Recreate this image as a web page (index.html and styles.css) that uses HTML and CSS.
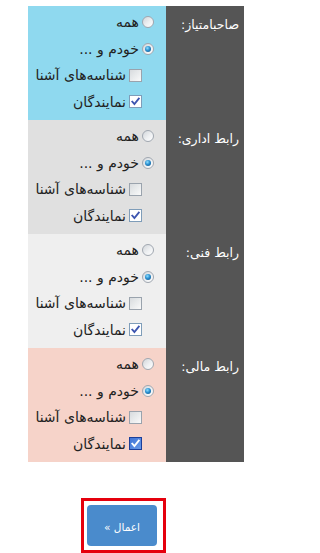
FILE: index.html
```html
<!DOCTYPE html>
<html lang="fa">
<head>
<meta charset="utf-8">
<title>تنظیمات</title>
<link rel="stylesheet" href="styles.css">
</head>
<body>
<div class="form" dir="rtl">
  <div class="row c-blue">
    <div class="label">صاحبامتیاز:</div>
    <div class="opts">
      <div class="opt"><span class="radio"></span><span>همه</span></div>
      <div class="opt"><span class="radio on"></span><span>خودم و ...</span></div>
      <div class="opt sub"><span class="check"></span><span>شناسه‌های آشنا</span></div>
      <div class="opt sub"><span class="check on"><svg viewBox="0 0 12 12" class="tick"><path d="M2.5 6.2 L4.8 8.8 L9.6 2.8"/></svg></span><span>نمایندگان</span></div>
    </div>
  </div>
  <div class="row c-gray">
    <div class="label">رابط اداری:</div>
    <div class="opts">
      <div class="opt"><span class="radio"></span><span>همه</span></div>
      <div class="opt"><span class="radio on"></span><span>خودم و ...</span></div>
      <div class="opt sub"><span class="check"></span><span>شناسه‌های آشنا</span></div>
      <div class="opt sub"><span class="check on"><svg viewBox="0 0 12 12" class="tick"><path d="M2.5 6.2 L4.8 8.8 L9.6 2.8"/></svg></span><span>نمایندگان</span></div>
    </div>
  </div>
  <div class="row c-light">
    <div class="label">رابط فنی:</div>
    <div class="opts">
      <div class="opt"><span class="radio"></span><span>همه</span></div>
      <div class="opt"><span class="radio on"></span><span>خودم و ...</span></div>
      <div class="opt sub"><span class="check"></span><span>شناسه‌های آشنا</span></div>
      <div class="opt sub"><span class="check on"><svg viewBox="0 0 12 12" class="tick"><path d="M2.5 6.2 L4.8 8.8 L9.6 2.8"/></svg></span><span>نمایندگان</span></div>
    </div>
  </div>
  <div class="row c-pink">
    <div class="label">رابط مالی:</div>
    <div class="opts">
      <div class="opt"><span class="radio"></span><span>همه</span></div>
      <div class="opt"><span class="radio on"></span><span>خودم و ...</span></div>
      <div class="opt sub"><span class="check"></span><span>شناسه‌های آشنا</span></div>
      <div class="opt sub"><span class="check on hover"><svg viewBox="0 0 12 12" class="tick"><path d="M2.5 6.2 L4.8 8.8 L9.6 2.8"/></svg></span><span>نمایندگان</span></div>
    </div>
  </div>
</div>
<div class="actions">
  <div class="focus-box">
    <button class="btn" type="button" dir="rtl">اعمال »</button>
  </div>
</div>
</body>
</html>
```
FILE: styles.css
```css
html, body {
  margin: 0;
  padding: 0;
  background: #ffffff;
}
body {
  font-family: "DejaVu Sans", Tahoma, sans-serif;
  font-size: 14px;
  color: #222222;
}
.form {
  width: 216px;
  margin: 6px 0 0 28px;
}
.row {
  display: grid;
  grid-template-columns: 78px 138px;
  height: 114px;
}
.label {
  background: #555555;
  color: #ffffff;
  padding: 6px 5px 0 0;
  line-height: 26px;
  font-size: 12.5px;
}
.opts {
  padding: 3px 0 5px 0;
}
.c-blue .opts { background: #8fd9ef; }
.c-gray .opts { background: #e0e0e0; }
.c-light .opts { background: #efefef; }
.c-pink .opts { background: #f6d3c9; }
.opt {
  display: flex;
  align-items: center;
  gap: 3px;
  height: 26.5px;
  padding-right: 12px;
  white-space: nowrap;
}
.opt.sub {
  padding-right: 24px;
}
.radio {
  width: 10px;
  height: 10px;
  border-radius: 50%;
  border: 1px solid #a0a7b0;
  background: linear-gradient(135deg, #d2d6da 0%, #eef0f2 55%, #ffffff 100%);
  display: flex;
  align-items: center;
  justify-content: center;
  flex: none;
}
.radio.on::before {
  content: "";
  width: 6px;
  height: 6px;
  border-radius: 50%;
  background: radial-gradient(circle at 40% 35%, #8fe0ff 0%, #2a8fd0 45%, #0b4c80 100%);
}
.check {
  width: 11px;
  height: 11px;
  border: 1px solid #9aa3ad;
  background: linear-gradient(135deg, #d8dbde 0%, #eceeef 60%, #fafafa 100%);
  display: flex;
  align-items: center;
  justify-content: center;
  flex: none;
}
.check.on {
  background: #ffffff;
  border-color: #7f9db9;
}
.check.hover {
  background: linear-gradient(135deg, #3f74d6 0%, #6a9ae8 100%);
  border-color: #1b3f9a;
}
.tick {
  width: 11px;
  height: 11px;
  display: block;
}
.tick path {
  fill: none;
  stroke: #3d55b0;
  stroke-width: 2;
  stroke-linecap: square;
}
.check.hover .tick path {
  stroke: #ffffff;
}
.actions {
  padding: 36px 0 0 81px;
}
.focus-box {
  display: inline-block;
  border: 3px solid #e5000d;
  padding: 4px 6px 4px 3px;
  background: #ffffff;
}
.btn {
  display: block;
  width: 70px;
  height: 41px;
  border: none;
  border-radius: 4px;
  background: #4a8bcc;
  color: #ffffff;
  font-family: "DejaVu Sans", Tahoma, sans-serif;
  font-size: 10.5px;
  padding: 3px 0 0 0;
  margin: 0;
  cursor: pointer;
}
```
